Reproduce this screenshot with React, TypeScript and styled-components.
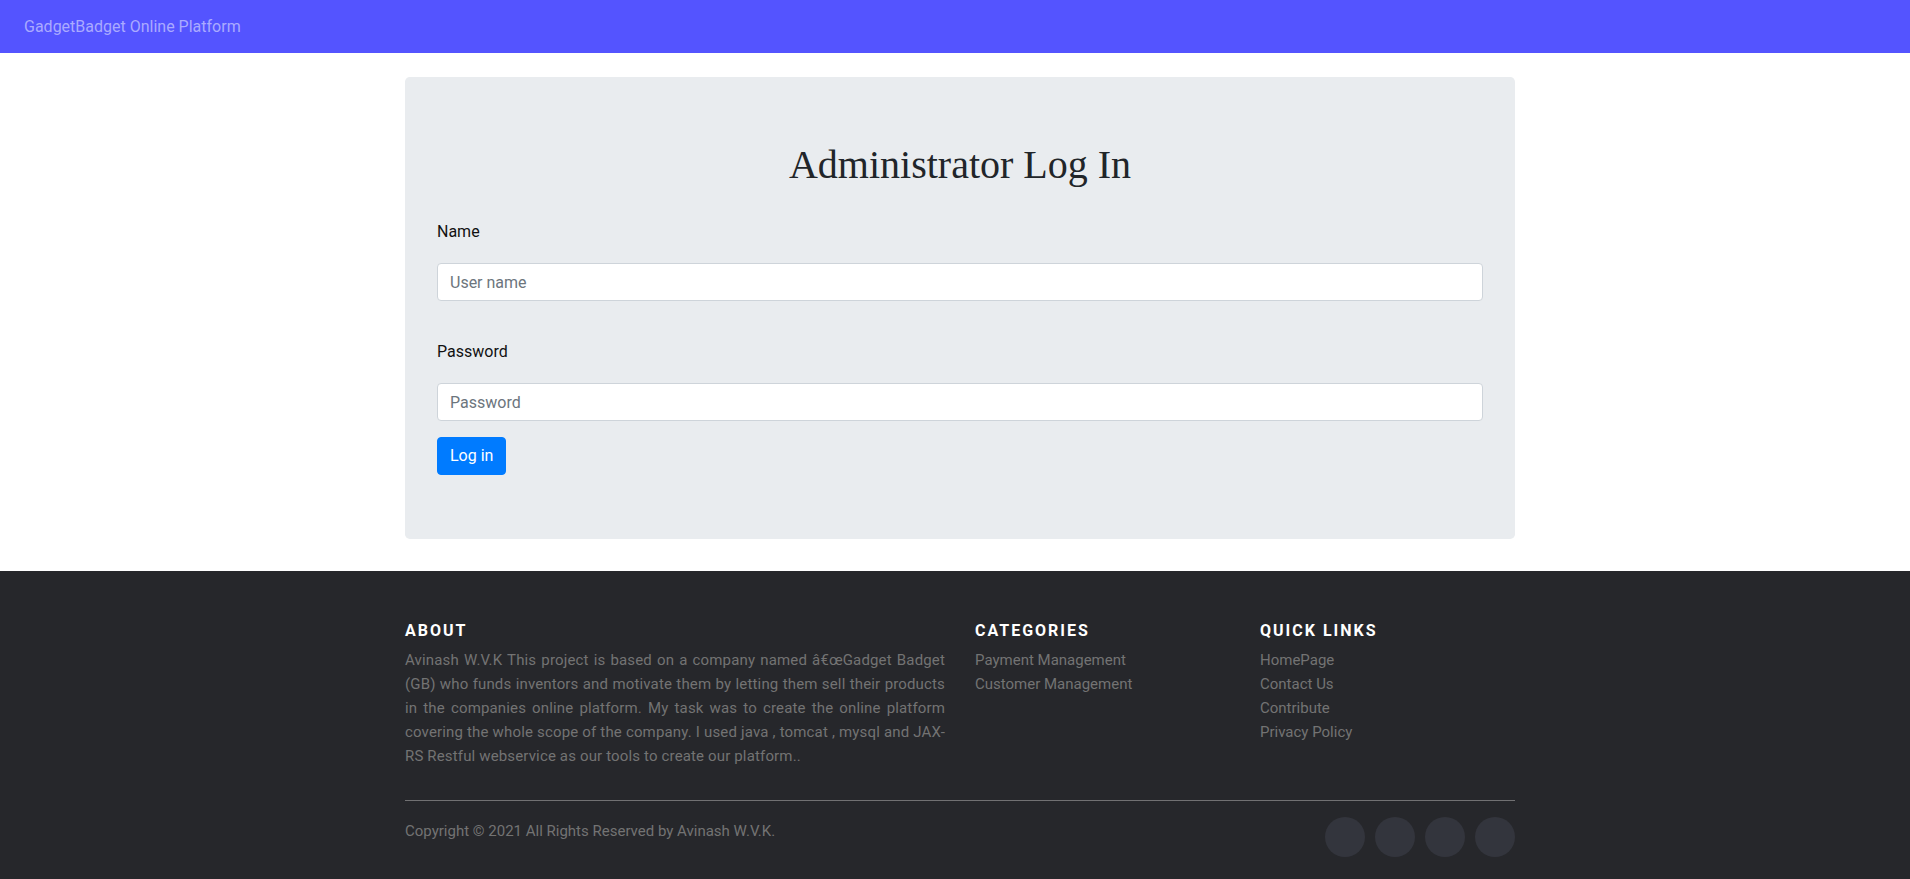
import React from "react";
import styled, { createGlobalStyle } from "styled-components";

const GlobalStyle = createGlobalStyle`
  html, body {
    margin: 0;
    padding: 0;
    background: #ffffff;
  }
  body {
    font-family: Roboto, "Noto Sans", "Liberation Sans", sans-serif;
    font-size: 16px;
    line-height: 1.5;
    color: #212529;
  }
  *, *::before, *::after { box-sizing: border-box; }
`;

const Navbar = styled.nav`
  height: 53px;
  background: #5454ff;
  display: flex;
  align-items: center;
  padding: 0 24px;
`;

const Brand = styled.a`
  color: #aaaaff;
  font-size: 16px;
  text-decoration: none;
  line-height: 1;
`;

const Main = styled.main`
  width: 1110px;
  margin: 24px 0 32px calc(50% - 550px);
`;

const Jumbotron = styled.section`
  background: #e9ecef;
  border-radius: 4.8px;
  padding: 64px 32px;
`;

const Title = styled.h1`
  margin: 0 0 31px;
  font-family: "Liberation Serif", "Times New Roman", serif;
  font-weight: 400;
  font-size: 40px;
  line-height: 48px;
  text-align: center;
  color: #212529;
`;

const Form = styled.form`
  display: flex;
  flex-direction: column;
  align-items: stretch;
`;

const FieldLabel = styled.label<{ $gapTop?: number }>`
  display: block;
  margin-top: ${(p) => p.$gapTop ?? 0}px;
  margin-bottom: 19px;
  font-size: 16px;
  line-height: 24px;
  color: #111;
`;

const TextInput = styled.input`
  display: block;
  width: 100%;
  height: 38px;
  padding: 6px 12px;
  font-family: inherit;
  font-size: 16px;
  line-height: 24px;
  color: #495057;
  background: #fff;
  border: 1px solid #ced4da;
  border-radius: 4px;
  outline: none;
  &::placeholder { color: #6c757d; }
`;

const SubmitButton = styled.button`
  align-self: flex-start;
  margin-top: 16px;
  height: 38px;
  padding: 6px 12px;
  font-family: inherit;
  font-size: 16px;
  line-height: 24px;
  color: #fff;
  background: #007bff;
  border: 1px solid #007bff;
  border-radius: 4px;
  cursor: pointer;
`;

const Footer = styled.footer`
  background: #26272b;
  padding: 45px 0 22px;
  font-size: 15px;
  line-height: 24px;
  color: #737373;
`;

const FooterInner = styled.div`
  width: 1110px;
  margin-left: calc(50% - 550px);
`;

const FooterRow = styled.div`
  display: grid;
  grid-template-columns: 540px 255px 255px;
  column-gap: 30px;
`;

const FooterHeading = styled.h6`
  margin: 5px 0 8px;
  font-size: 16px;
  line-height: 19.2px;
  font-weight: 700;
  color: #fff;
  text-transform: uppercase;
  letter-spacing: 2px;
`;

const AboutText = styled.p`
  margin: 0 0 16px;
  text-align: justify;
  letter-spacing: 0.15px;
`;

const LinkList = styled.ul`
  list-style: none;
  margin: 0;
  padding: 0;
`;

const FooterLink = styled.a`
  color: #737373;
  text-decoration: none;
`;

const Divider = styled.hr`
  margin: 16px 0;
  border: 0;
  border-top: 1px solid rgba(187, 187, 187, 0.5);
`;

const BottomRow = styled.div`
  display: flex;
  justify-content: space-between;
  align-items: flex-start;
`;

const Copyright = styled.p`
  margin: 2px 0 0;
`;

const SocialList = styled.ul`
  list-style: none;
  margin: 0;
  padding: 0;
  display: flex;
  gap: 10px;
`;

const SocialDot = styled.a`
  display: block;
  width: 40px;
  height: 40px;
  border-radius: 50%;
  background: #33353d;
`;

export default function App() {
  return (
    <>
      <GlobalStyle />
      <Navbar>
        <Brand href="#">GadgetBadget Online Platform</Brand>
      </Navbar>
      <Main>
        <Jumbotron>
          <Title>Administrator Log In</Title>
          <Form onSubmit={(e) => e.preventDefault()}>
            <FieldLabel htmlFor="username">Name</FieldLabel>
            <TextInput id="username" type="text" placeholder="User name" />
            <FieldLabel htmlFor="password" $gapTop={39}>Password</FieldLabel>
            <TextInput id="password" type="password" placeholder="Password" />
            <SubmitButton type="submit">Log in</SubmitButton>
          </Form>
        </Jumbotron>
      </Main>
      <Footer>
        <FooterInner>
          <FooterRow>
            <div>
              <FooterHeading>About</FooterHeading>
              <AboutText>
                Avinash W.V.K This project is based on a company named â€œGadget Badget (GB) who funds inventors and motivate them by letting them sell their products in the companies online platform. My task was to create the online platform covering the whole scope of the company. I used java , tomcat , mysql and JAX-RS Restful webservice as our tools to create our platform..
              </AboutText>
            </div>
            <div>
              <FooterHeading>Categories</FooterHeading>
              <LinkList>
                <li><FooterLink href="#">Payment Management</FooterLink></li>
                <li><FooterLink href="#">Customer Management</FooterLink></li>
              </LinkList>
            </div>
            <div>
              <FooterHeading>Quick Links</FooterHeading>
              <LinkList>
                <li><FooterLink href="#">HomePage</FooterLink></li>
                <li><FooterLink href="#">Contact Us</FooterLink></li>
                <li><FooterLink href="#">Contribute</FooterLink></li>
                <li><FooterLink href="#">Privacy Policy</FooterLink></li>
              </LinkList>
            </div>
          </FooterRow>
          <Divider />
          <BottomRow>
            <Copyright>Copyright © 2021 All Rights Reserved by Avinash W.V.K.</Copyright>
            <SocialList>
              <li><SocialDot href="#" aria-label="facebook" /></li>
              <li><SocialDot href="#" aria-label="twitter" /></li>
              <li><SocialDot href="#" aria-label="dribbble" /></li>
              <li><SocialDot href="#" aria-label="linkedin" /></li>
            </SocialList>
          </BottomRow>
        </FooterInner>
      </Footer>
    </>
  );
}
